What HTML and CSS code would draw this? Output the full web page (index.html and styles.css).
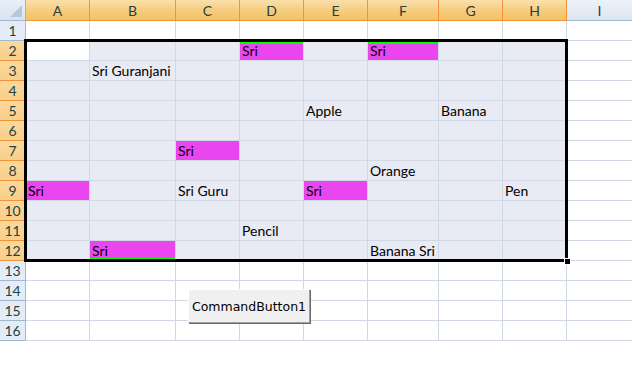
FILE: index.html
```html
<!DOCTYPE html>
<html lang="en">
<head>
    <meta charset="UTF-8">
    <meta name="viewport" content="width=device-width, initial-scale=1.0">
    <title>Sheet1</title>

    <link rel="stylesheet" href="styles.css">
</head>
<body>
    <div class="workbook">
        <div id="sheet" class="sheet"></div>
        <div class="selection"><span class="fill-handle"></span></div>
        <button class="cmd-button">CommandButton1</button>
    </div>

    <script>
        var sheetEle = document.getElementById("sheet")
        var cols = ["A", "B", "C", "D", "E", "F", "G", "H", "I"]

        // row -> { col: [text, extra classes] }
        var data = {
            2: { D: ["Sri", "pink mark-top"], F: ["Sri", "pink mark-top"] },
            3: { B: ["Sri Guranjani", ""] },
            5: { E: ["Apple", ""], G: ["Banana", ""] },
            7: { C: ["Sri", "pink"] },
            8: { F: ["Orange", ""] },
            9: { A: ["Sri", "pink mark-left"], C: ["Sri Guru", ""], E: ["Sri", "pink"], H: ["Pen", ""] },
            11: { D: ["Pencil", ""] },
            12: { B: ["Sri", "pink mark-bottom"], F: ["Banana Sri", ""] }
        }

        function inRange(row, col) {
            return row >= 2 && row <= 12 && col != "I"
        }

        function renderSheet() {
            let html = `<div class="corner"><span class="corner-tri"></span></div>`
            cols.forEach((col) => {
                let sel = col != "I" ? " hdr-sel" : ""
                html += `<div class="col-hdr${sel}">${col}</div>`
            })

            for (let row = 1; row <= 16; row++) {
                let sel = row >= 2 && row <= 12 ? " hdr-sel" : ""
                html += `<div class="row-hdr${sel}">${row}</div>`
                cols.forEach((col) => {
                    let cls = "cell"
                    if (inRange(row, col)) cls += " in-sel"
                    if (row == 2 && col == "A") cls += " active"
                    let text = ""
                    if (data[row] && data[row][col]) {
                        text = data[row][col][0]
                        if (data[row][col][1]) cls += " " + data[row][col][1]
                    }
                    html += `<div class="${cls}">${text}</div>`
                })
            }
            sheetEle.innerHTML = html
        }

        renderSheet()
    </script>
</body>
</html>
```

FILE: styles.css
```css
body {
    margin: 0;
    background-color: white;
}

.workbook {
    position: relative;
    width: 632px;
    height: 365px;
    overflow: hidden;
}

.sheet {
    display: grid;
    grid-template-columns: 26px 64px 86px 64px 64px 64px 71px 64px 64px 66px;
    grid-template-rows: 21px repeat(16, 20px);
    font-family: Lato, "Open Sans", sans-serif;
}

.corner {
    position: relative;
    background: linear-gradient(#e9eff8, #d9e3f1);
    border-right: 1px solid #9eb6ce;
    border-bottom: 1px solid #9eb6ce;
}

.corner-tri {
    position: absolute;
    right: 3px;
    bottom: 3px;
    width: 0;
    height: 0;
    border-left: 12px solid transparent;
    border-bottom: 12px solid #b7c7dc;
}

.col-hdr {
    display: flex;
    justify-content: center;
    align-items: center;
    background: linear-gradient(#eef3fa, #dbe4f1);
    border-right: 1px solid #9eb6ce;
    border-bottom: 1px solid #9eb6ce;
    color: #27413e;
    font-size: 14px;
}

.col-hdr.hdr-sel {
    background: linear-gradient(#fae0ad, #f6cd80 50%, #f2c163);
    border-right-color: #f29436;
    border-bottom-color: #f29436;
}

.row-hdr {
    display: flex;
    justify-content: center;
    align-items: center;
    background-color: #e4ecf7;
    border-right: 1px solid #9eb6ce;
    border-bottom: 1px solid #9eb6ce;
    color: #27413e;
    font-size: 14px;
}

.row-hdr.hdr-sel {
    background: linear-gradient(#fbd89c, #f8cf8b);
    border-right-color: #f29436;
    border-bottom-color: #f29436;
}

.cell {
    display: flex;
    align-items: flex-end;
    padding: 0 0 1px 2px;
    box-sizing: border-box;
    border-right: 1px solid #d0d7e5;
    border-bottom: 1px solid #d0d7e5;
    font-size: 14px;
    color: black;
    white-space: nowrap;
}

.cell.in-sel {
    background-color: #e8eaf4;
}

.cell.active {
    background-color: white;
}

.cell.pink {
    background-color: #ea46ef;
}

.cell.mark-top {
    box-shadow: inset 0 3px 0 #00ff00;
}

.cell.mark-bottom {
    box-shadow: inset 0 -2px 0 #00ff00;
}

.cell.mark-left {
    box-shadow: inset 1px 0 0 #00ff00;
}

.selection {
    position: absolute;
    left: 24px;
    top: 39px;
    width: 544px;
    height: 223px;
    box-sizing: border-box;
    border: 3px solid black;
    pointer-events: none;
}

.fill-handle {
    position: absolute;
    right: -6px;
    bottom: -6px;
    width: 5px;
    height: 5px;
    background-color: black;
    border: 1px solid white;
}

.cmd-button {
    position: absolute;
    left: 188px;
    top: 289px;
    width: 122px;
    height: 34px;
    background-color: #f0f0f0;
    border: 1px solid;
    border-color: #ffffff #a0a0a0 #a0a0a0 #ffffff;
    box-shadow: 1px 1px 0 #696969;
    font-family: "DejaVu Sans", sans-serif;
    font-size: 12.5px;
    color: black;
    padding: 0;
}
```
